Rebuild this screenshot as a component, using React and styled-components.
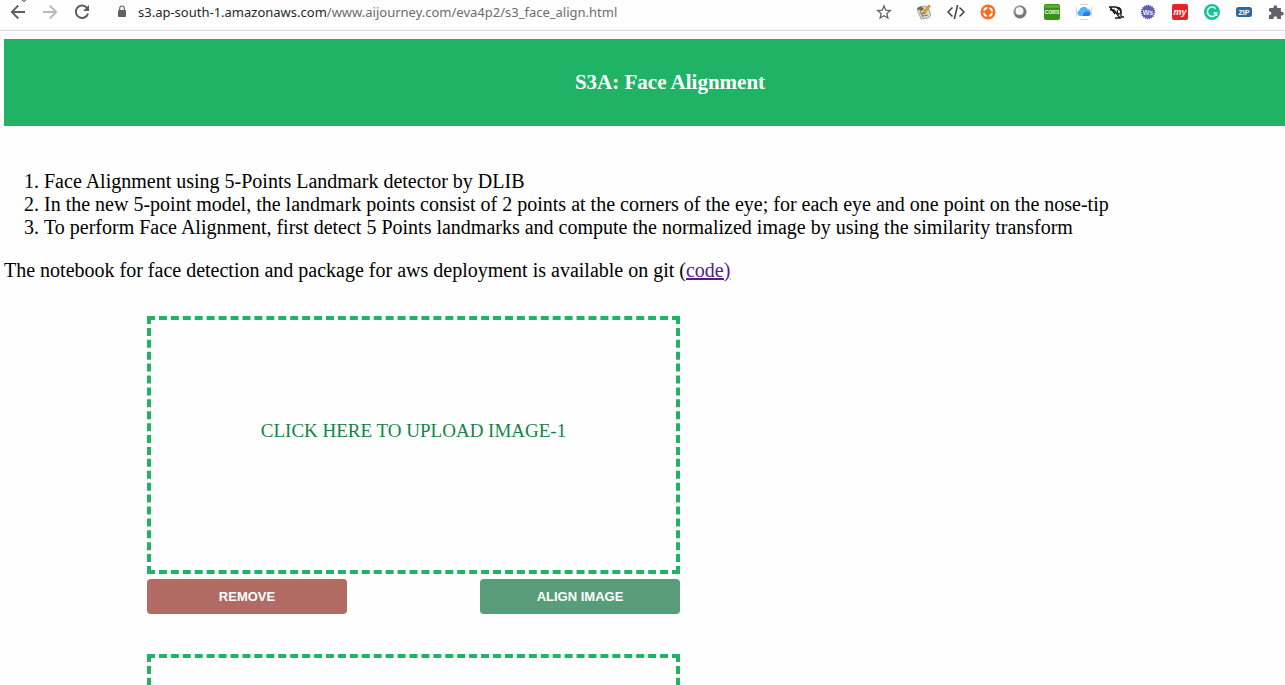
import React from "react";
import styled, { createGlobalStyle } from "styled-components";

const GlobalStyle = createGlobalStyle`
  * { box-sizing: border-box; }
  body {
    margin: 0;
    background: #fefefe;
    color: #000;
    font: 20px/23px "Liberation Serif", "Times New Roman", serif;
  }
`;

const Frame = styled.div`
  display: flex;
  flex-direction: column;
  height: 100vh;
  overflow: hidden;
`;

const Toolbar = styled.nav`
  display: flex;
  flex: none;
  align-items: center;
  height: 31px;
  padding: 0 1px 6px 10px;
  border-bottom: 1px solid #d8d9e2;
`;

const Group = styled.div`
  display: flex;
  align-items: center;
  gap: 16px;
`;

const Extensions = styled(Group)`
  margin-left: auto;
`;

const IconButton = styled.button`
  display: flex;
  flex: none;
  width: 16px;
  height: 24px;
  padding: 4px 0;
  margin: 0 ${(p) => p.$after || 0}px 0 0;
  border: 0;
  background: none;
  svg { display: block; flex: none; overflow: visible; }
`;

const Address = styled.div`
  display: flex;
  align-items: center;
  flex: 1;
  margin-left: 24px;
  gap: 8px;
`;

const AddressText = styled.div`
  font: 13px/24px "Noto Sans", "Open Sans", sans-serif;
  color: #6a6c70;
  white-space: nowrap;
  strong { font-weight: 400; color: #24272b; }
`;

const Page = styled.main`
  flex: 1;
  min-height: 0;
  overflow: hidden;
  padding: 8px 0 0 4px;
`;

const Banner = styled.header`
  display: flex;
  align-items: center;
  justify-content: center;
  height: 87px;
  padding: 0 0 2px 51px;
  background: #20b265;
  color: #fff;
`;

const Title = styled.h1`
  margin: 0;
  font-size: 21px;
  line-height: 24px;
`;

const Notes = styled.ol`
  margin: 44px 0 20px;
  padding-left: 40px;
`;

const Paragraph = styled.p`
  margin: 0;
`;

const CodeLink = styled.a`
  color: #551a8b;
`;

const Uploads = styled.section`
  display: flex;
  flex-direction: column;
  gap: 40px;
  width: 533px;
  margin: 34px 0 0 143px;
`;

const Card = styled.div`
  display: flex;
  flex-direction: column;
  gap: 5px;
`;

const DropZone = styled.button`
  height: 258px;
  padding: 0 0 28px;
  border: 4px dashed #20b265;
  background: none;
  color: #15824b;
  font: 19px/22px "Liberation Serif", "Times New Roman", serif;
`;

const Actions = styled.div`
  display: flex;
  justify-content: space-between;
`;

const ActionButton = styled.button`
  width: 200px;
  height: 35px;
  padding: 0;
  border: 0;
  border-radius: 4px;
  background: ${(p) => p.$color};
  color: #fff;
  font: bold 13px/16px "Liberation Sans", Arial, sans-serif;
`;

const Icon = ({ children }) => (
  <svg width="16" height="16" viewBox="0 0 16 16" fill="none" aria-hidden="true">
    {children}
  </svg>
);

const Arrow = ({ color, flip }) => (
  <path
    d="M15 8H2M8.300 1.500 1.800 8l6.500 6.500"
    transform={flip ? "translate(16 0) scale(-1 1)" : undefined}
    stroke={color}
    strokeWidth="1.800"
  />
);

const iconFont = "Liberation Sans, Arial, sans-serif";

const extensions = [
  ["Notes", <>
    <path d="m1 5 7-3 4 1 3 8-3 3-7 1-2-5z" fill="#d9d6cf" stroke="#8a857c" strokeWidth=".7" />
    <path d="m4 7 3 6M5 10l5-1M6 12l6-1M1 5l5 1" stroke="#77736b" strokeWidth=".9" />
    <path d="m1 4 4-2 3 3-3 2z" fill="#6f675c" />
    <path d="m7 8 6-7 1.500 1L9 9l-3 1z" fill="#ef9f24" stroke="#a96516" strokeWidth=".5" />
  </>],
  ["Source", <path d="M4.500 3.500 0 8l4.500 4.500M11.500 3.500 16 8l-4.500 4.500M9.700 1 6.300 15" stroke="#3c4043" strokeWidth="1.500" />],
  ["Support", <>
    <circle cx="8" cy="8" r="7.500" fill="#f76c24" />
    <circle cx="8" cy="8" r="4.300" stroke="#fff" strokeWidth="1.900" strokeDasharray="4.500 2.250" transform="rotate(15 8 8)" />
    <circle cx="8" cy="8" r="1.800" fill="#f76c24" />
  </>],
  ["Circle", <>
    <circle cx="8" cy="8" r="6.500" fill="#77777a" />
    <circle cx="7.500" cy="7" r="4" fill="#f7f7f7" />
    <path d="M3.500 10A5 5 0 0 1 8 2" stroke="#aaa" />
  </>],
  ["CORS", <>
    <rect width="16" height="16" rx="2" fill="#359414" />
    <path d="M1 1h14v3H1z" fill="#58ac35" />
    <text x="8" y="10" textAnchor="middle" fill="#fff" fontSize="5" fontWeight="700" fontFamily={iconFont}>CORS</text>
  </>],
  ["Cloud", <>
    <path d="M4 .5h8M4 15.500h8M.5 3v10M15.500 3v10" stroke="#d6d6d6" />
    <path d="M4 12a3 3 0 0 1-.7-5.800A4.500 4.500 0 0 1 11.500 5a3.600 3.600 0 0 1 .8 7z" fill="#55b2f6" />
    <path d="M7 12a4 4 0 0 1 7-3c1 1 0 3-2 3z" fill="#3179e8" />
  </>],
  ["Capture", <>
    <path d="M1 3h7l5 4v6h3M2 6h4l6 8H7M2 3l5 7" stroke="#171717" strokeWidth="1.300" />
    <path d="M9 3.500c3 0 4 2 4 4s-2 3-3 2-1-3 0-3" stroke="#171717" strokeWidth="1.300" />
  </>],
  ["WebSocket", <>
    <circle cx="8" cy="8" r="6.500" fill="#6260b0" />
    <circle cx="8" cy="8" r="6.500" stroke="#5453a0" strokeDasharray="1 1" strokeWidth="1.500" />
    <text x="8" y="10.500" textAnchor="middle" fill="#eef" fontSize="7" fontWeight="700" fontFamily={iconFont}>Ws</text>
  </>],
  ["My", <>
    <rect width="16" height="16" rx="2" fill="#ec2028" />
    <text x="8" y="10.500" textAnchor="middle" fill="#fff" fontSize="9" fontStyle="italic" fontWeight="700" fontFamily={iconFont}>my</text>
  </>],
  ["Grammar", <>
    <circle cx="8" cy="8" r="8" fill="#15c39a" />
    <path d="M11.700 4.800A4.700 4.700 0 1 0 12.600 9H9.500M12.600 8.500V12" stroke="#fff" strokeWidth="1.500" />
  </>],
  ["ZIP", <>
    <rect y="3" width="16" height="10" rx="2.500" fill="#2969ac" />
    <text x="8" y="10.500" textAnchor="middle" fill="#fff" fontSize="7" fontWeight="700" fontFamily={iconFont}>ZIP</text>
  </>],
  ["Extensions", <path d="M2 4h3.500V3a1.800 1.800 0 1 1 3.700 0v1h3.700v3.800h.9a1.800 1.800 0 0 1 0 3.700h-.9V15H9.200v-1a1.800 1.800 0 0 0-3.700 0v1H1v-4h1a1.800 1.800 0 0 0 0-3.500H1V5q0-1 1-1z" fill="#5f6368" />],
];

export default function App() {
  return (
    <Frame>
      <GlobalStyle />
      <Toolbar>
        <Group>
          <IconButton aria-label="Back">
            <Icon>
              <Arrow color="#5a5f68" />
              <path d="M12.500-4v.5q1.500 2 3 0V-4" stroke="#333" />
            </Icon>
          </IconButton>
          <IconButton aria-label="Forward">
            <Icon><Arrow color="#b9b9bb" flip /></Icon>
          </IconButton>
          <IconButton aria-label="Reload">
            <Icon>
              <path d="M13 4A6.200 6.200 0 1 0 14 9.500" stroke="#5a5f68" strokeWidth="2" />
              <path d="M15 1v6H9z" fill="#5a5f68" />
            </Icon>
          </IconButton>
        </Group>
        <Address>
          <IconButton aria-label="Site information">
            <Icon>
              <rect x="4" y="6" width="8" height="7" rx="1" fill="#5f6368" />
              <path d="M5.700 6V4.300a2.300 2.300 0 0 1 4.600 0V6" stroke="#5f6368" strokeWidth="1.200" />
            </Icon>
          </IconButton>
          <AddressText>
            <strong>s3.ap-south-1.amazonaws.com</strong>/www.aijourney.com/eva4p2/s3_face_align.html
          </AddressText>
        </Address>
        <Extensions>
          <IconButton aria-label="Bookmark" $after={8}>
            <Icon>
              <path d="m8 2 1.800 4.200 4.500.4-3.400 3 1 4.400L8 11.700 4.100 14l1-4.400-3.400-3 4.500-.4z" stroke="#5f6368" strokeWidth="1.300" />
            </Icon>
          </IconButton>
          {extensions.map(([name, art]) => (
            <IconButton key={name} aria-label={name}><Icon>{art}</Icon></IconButton>
          ))}
        </Extensions>
      </Toolbar>
      <Page>
        <Banner><Title>S3A: Face Alignment</Title></Banner>
        <Notes>
          <li>Face Alignment using 5-Points Landmark detector by DLIB</li>
          <li>In the new 5-point model, the landmark points consist of 2 points at the corners of the eye; for each eye and one point on the nose-tip</li>
          <li>To perform Face Alignment, first detect 5 Points landmarks and compute the normalized image by using the similarity transform</li>
        </Notes>
        <Paragraph>
          The notebook for face detection and package for aws deployment is available on git (<CodeLink href="#code">code)</CodeLink>
        </Paragraph>
        <Uploads>
          <Card>
            <DropZone type="button">CLICK HERE TO UPLOAD IMAGE-1</DropZone>
            <Actions>
              <ActionButton type="button" $color="#b16b62">REMOVE</ActionButton>
              <ActionButton type="button" $color="#589c79">ALIGN IMAGE</ActionButton>
            </Actions>
          </Card>
          <Card>
            <DropZone type="button" aria-label="Aligned image" />
          </Card>
        </Uploads>
      </Page>
    </Frame>
  );
}
